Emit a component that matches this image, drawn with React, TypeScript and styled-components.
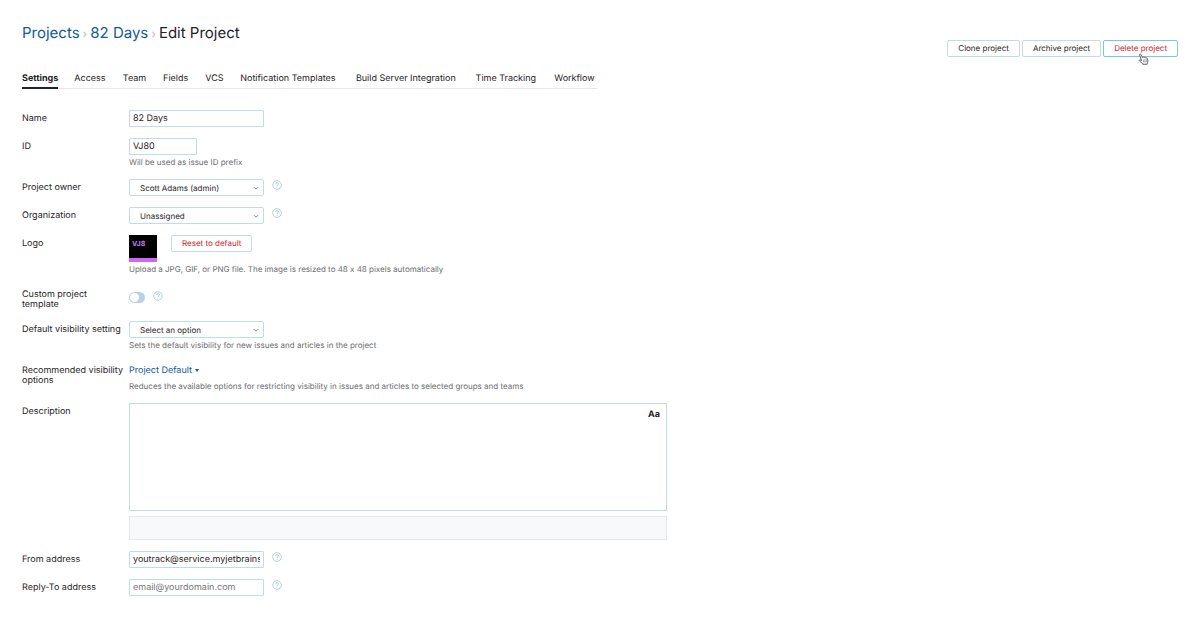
import React from "react";
import styled, { createGlobalStyle, css } from "styled-components";

const color = {
  text: "#1f2326",
  hint: "#6b6d70",
  link: "#0f5b99",
  border: "#c3d9ec",
  danger: "#cc1f2b",
};

const GlobalStyle = createGlobalStyle`
  *, *::before, *::after { box-sizing: border-box; }
  body {
    margin: 0;
    background: #fff;
    color: ${color.text};
    font: 9px/10px Inter, "Liberation Sans", sans-serif;
    font-variant-ligatures: no-contextual;
    text-rendering: geometricPrecision;
  }
  button, input, select, textarea {
    margin: 0;
    color: inherit;
    font: inherit;
    text-rendering: inherit;
  }
`;

const Page = styled.div`
  padding: 22px;
`;

const Header = styled.header`
  display: flex;
  justify-content: space-between;
  align-items: flex-start;
`;

const Breadcrumbs = styled.h1`
  display: flex;
  align-items: baseline;
  gap: 3px;
  margin: 0;
  font-size: 15px;
  line-height: 22px;
  font-weight: 400;
`;

const Crumb = styled.a`
  color: ${color.link};
  text-decoration: none;
`;

const Separator = styled.span`
  color: #b8bdc1;
  font-size: 12px;
`;

const Actions = styled.div`
  display: flex;
  gap: 2px;
  padding-top: 18px;
`;

const Button = styled.button<{ $danger?: boolean; $hovered?: boolean }>`
  position: relative;
  height: 17px;
  padding: 0 10px;
  border: 1px solid ${(p) => (p.$hovered ? "#80c1f5" : color.border)};
  border-radius: 2px;
  background: #fff;
  font-size: 8px;
  line-height: 15px;
  white-space: nowrap;
  ${(p) => p.$danger && css`color: ${color.danger};`}
`;

const Pointer = styled.svg`
  position: absolute;
  left: 34px;
  top: 12px;
  width: 11px;
  height: 12px;
  z-index: 1;
`;

const Tabs = styled.nav`
  display: flex;
  gap: 16px;
  width: fit-content;
  margin-top: 16px;
  border-bottom: 1px solid #e4e6e8;
`;

/* The hidden bold copy keeps a tab's width the same when it is selected. */
const Tab = styled.a<{ $active?: boolean }>`
  display: flex;
  flex-direction: column;
  margin-bottom: -1px;
  padding-bottom: 2px;
  border-bottom: 2px solid ${(p) => (p.$active ? color.text : "transparent")};
  color: inherit;
  font-weight: ${(p) => (p.$active ? 700 : 400)};
  line-height: 12px;
  text-decoration: none;
  white-space: nowrap;
  &::after {
    content: attr(data-label);
    height: 0;
    overflow: hidden;
    visibility: hidden;
    font-weight: 700;
  }
`;

const Form = styled.form`
  display: flex;
  flex-direction: column;
  gap: 11px;
  margin-top: 21px;
`;

const Row = styled.div`
  display: grid;
  grid-template-columns: 103px minmax(0, 538px);
  column-gap: 4px;
`;

const Label = styled.label`
  padding-top: 4px;
`;

const Field = styled.div`
  display: flex;
  flex-direction: column;
  gap: 2px;
`;

const Line = styled.div`
  display: flex;
  align-items: flex-start;
  gap: 8px;
`;

const Hint = styled.div`
  color: ${color.hint};
  font-size: 8px;
  line-height: 11px;
`;

const TextInput = styled.input<{ $short?: boolean }>`
  width: ${(p) => (p.$short ? 68 : 135)}px;
  height: 17px;
  padding: 0 3px;
  border: 1px solid ${color.border};
  border-radius: 1px;
  background: #fff;
  &::placeholder { color: #777; opacity: 1; }
`;

const SelectBox = styled.div`
  position: relative;
  width: 135px;
`;

const SelectControl = styled.select`
  appearance: none;
  display: block;
  width: 100%;
  height: 17px;
  padding: 0 18px 0 10px;
  border: 1px solid ${color.border};
  border-radius: 2px;
  background: #fff;
  font-size: 8px;
`;

const Chevron = styled.svg`
  position: absolute;
  right: 5px;
  top: 7px;
  width: 6px;
  height: 5px;
  pointer-events: none;
`;

const HelpButton = styled.button`
  display: flex;
  margin-top: 1px;
  padding: 0;
  border: 0;
  background: none;
`;

const Logo = styled.div`
  width: 28px;
  height: 27px;
  margin-right: 6px;
  padding: 4px 3px;
  border-bottom: 4px solid #cd67f5;
  background: #000;
  color: #c777f8;
  font-size: 7px;
  font-weight: 700;
`;

const Toggle = styled.input`
  appearance: none;
  display: flex;
  width: 16px;
  height: 11px;
  margin-top: 6px;
  padding: 1px;
  border-radius: 6px;
  background: #b8d1e5;
  &::before {
    content: "";
    width: 9px;
    height: 9px;
    border-radius: 50%;
    background: #fff;
  }
  &:checked { justify-content: flex-end; background: #008eff; }
`;

const HelpSlot = styled.div`
  padding-top: 4px;
`;

const MenuButton = styled.button`
  display: flex;
  align-items: center;
  gap: 3px;
  height: 17px;
  padding: 0;
  border: 0;
  background: none;
  color: ${color.link};
`;

const Editor = styled.div`
  position: relative;
`;

const TextArea = styled.textarea`
  display: block;
  width: 100%;
  height: 108px;
  padding: 5px 28px 5px 5px;
  border: 1px solid ${color.border};
  resize: none;
`;

const FormatButton = styled.button`
  position: absolute;
  top: 6px;
  right: 7px;
  padding: 0;
  border: 0;
  background: none;
  font-size: 9px;
  font-weight: 700;
  line-height: 12px;
`;

const Attachments = styled.div`
  height: 24px;
  margin-top: 3px;
  border: 1px solid #e6e8ea;
  background: #f7f9fa;
`;

function Help({ topic }: { topic: string }) {
  return (
    <HelpButton type="button" aria-label={`Help: ${topic}`}>
      <svg width="10" height="10" viewBox="0 0 20 20" fill="none" stroke="#a9cbe6" strokeWidth="1.8">
        <circle cx="10" cy="10" r="8.6" />
        <path d="M7.3 8c0-1.700 1.200-2.800 2.800-2.800s2.700 1 2.700 2.500c0 2-2.700 2.200-2.700 4.200" />
        <path d="M10.100 13.400v1.800" />
      </svg>
    </HelpButton>
  );
}

function Select({ id, value }: { id: string; value: string }) {
  return (
    <SelectBox>
      <SelectControl id={id} defaultValue={value}>
        <option>{value}</option>
      </SelectControl>
      <Chevron viewBox="0 0 6 5" fill="none" stroke="#6f767b" strokeWidth="0.9">
        <path d="M1 1.200l2 2 2-2" />
      </Chevron>
    </SelectBox>
  );
}

const tabs = [
  "Settings",
  "Access",
  "Team",
  "Fields",
  "VCS",
  "Notification Templates",
  "Build Server Integration",
  "Time Tracking",
  "Workflow",
];

export default function App() {
  return (
    <>
      <GlobalStyle />
      <Page>
        <Header>
          <Breadcrumbs>
            <Crumb href="#projects">Projects</Crumb>
            <Separator>›</Separator>
            <Crumb href="#project">82 Days</Crumb>
            <Separator>›</Separator>
            <span>Edit Project</span>
          </Breadcrumbs>
          <Actions>
            <Button type="button">Clone project</Button>
            <Button type="button">Archive project</Button>
            <Button type="button" $danger $hovered>
              Delete project
              <Pointer viewBox="0 0 22 24" fill="#fff" stroke="#444" strokeWidth="1.700" strokeLinejoin="round" strokeLinecap="round">
                <path d="M7 14.500L3.200 4.200C2.600 2.200 5 1.200 6 3.100L9 9.200c.8-1.300 2.500-1.200 3.200 0 .9-1 2.500-.8 3.100.4 1-.7 2.500-.3 2.900 1l1.500 4.400c.5 2.500-.2 3.700-1 5l-.5 2.500H9.500l-.8-1.700-5.500-4.600c-1.700-1.700.3-3.500 2-2.500z" />
                <path d="M10.500 14l1 4.500M13.500 13.500l.8 4.500M16.300 13.200l.5 4" strokeWidth="1" />
              </Pointer>
            </Button>
          </Actions>
        </Header>

        <Tabs aria-label="Project sections">
          {tabs.map((name, i) => (
            <Tab key={name} href={`#tab-${i}`} data-label={name} $active={i === 0}>
              {name}
            </Tab>
          ))}
        </Tabs>

        <Form>
          <Row>
            <Label htmlFor="name">Name</Label>
            <Field>
              <TextInput id="name" defaultValue="82 Days" />
            </Field>
          </Row>
          <Row>
            <Label htmlFor="key">ID</Label>
            <Field>
              <TextInput id="key" $short defaultValue="VJ80" />
              <Hint>Will be used as issue ID prefix</Hint>
            </Field>
          </Row>
          <Row>
            <Label htmlFor="owner">Project owner</Label>
            <Line>
              <Select id="owner" value="Scott Adams (admin)" />
              <Help topic="Project owner" />
            </Line>
          </Row>
          <Row>
            <Label htmlFor="organization">Organization</Label>
            <Line>
              <Select id="organization" value="Unassigned" />
              <Help topic="Organization" />
            </Line>
          </Row>
          <Row>
            <Label as="div">Logo</Label>
            <Field>
              <Line>
                <Logo>VJ8</Logo>
                <Button type="button" $danger>Reset to default</Button>
              </Line>
              <Hint>Upload a JPG, GIF, or PNG file. The image is resized to 48 x 48 pixels automatically</Hint>
            </Field>
          </Row>
          <Row>
            <Label htmlFor="template">Custom project template</Label>
            <Line>
              <Toggle id="template" type="checkbox" />
              <HelpSlot>
                <Help topic="Custom project template" />
              </HelpSlot>
            </Line>
          </Row>
          <Row>
            <Label htmlFor="visibility">Default visibility setting</Label>
            <Field>
              <Select id="visibility" value="Select an option" />
              <Hint>Sets the default visibility for new issues and articles in the project</Hint>
            </Field>
          </Row>
          <Row>
            <Label htmlFor="recommended">Recommended visibility options</Label>
            <Field>
              <Line>
                <MenuButton id="recommended" type="button">
                  Project Default
                  <svg width="4" height="3" viewBox="0 0 4 3" fill={color.link}>
                    <path d="M0 0h4L2 3z" />
                  </svg>
                </MenuButton>
              </Line>
              <Hint>
                Reduces the available options for restricting visibility in issues and articles to selected groups and teams
              </Hint>
            </Field>
          </Row>
          <Row>
            <Label htmlFor="description">Description</Label>
            <Field>
              <Editor>
                <TextArea id="description" />
                <FormatButton type="button">Aa</FormatButton>
              </Editor>
              <Attachments />
            </Field>
          </Row>
          <Row>
            <Label htmlFor="from">From address</Label>
            <Line>
              <TextInput id="from" defaultValue="youtrack@service.myjetbrains.com" />
              <Help topic="From address" />
            </Line>
          </Row>
          <Row>
            <Label htmlFor="reply">Reply-To address</Label>
            <Line>
              <TextInput id="reply" placeholder="email@yourdomain.com" />
              <Help topic="Reply-To address" />
            </Line>
          </Row>
        </Form>
      </Page>
    </>
  );
}
